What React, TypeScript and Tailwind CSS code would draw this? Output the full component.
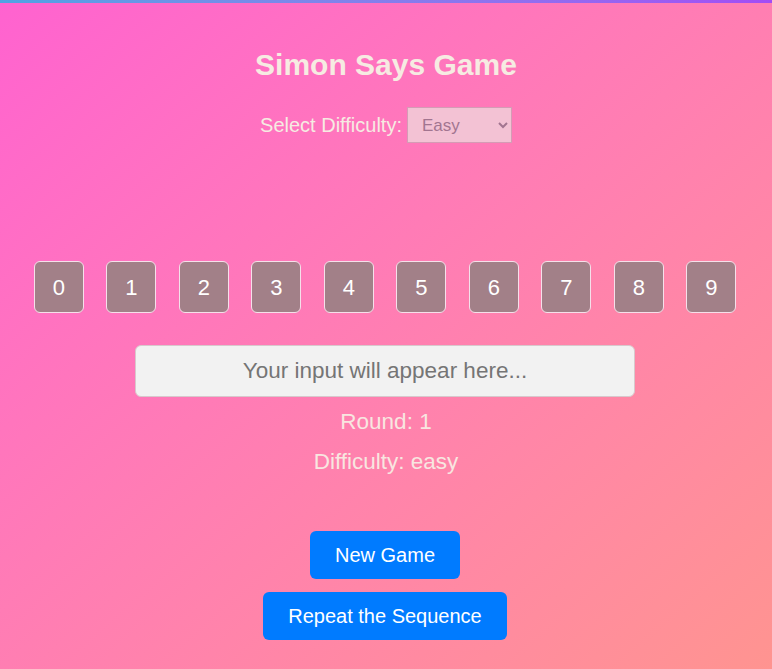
import { useState } from "react";

const digits = [0, 1, 2, 3, 4, 5, 6, 7, 8, 9];

export default function App() {
  const [difficulty, setDifficulty] = useState("easy");
  const [input, setInput] = useState("");

  return (
    <div className="min-h-[669px] w-full bg-gradient-to-br from-[#ff62d0] to-[#ff9490] font-['Liberation_Sans',Arial,sans-serif]">
      <div className="h-[3px] w-full bg-gradient-to-r from-[#4fa3e3] to-[#a24cf5]" />
      <div className="flex flex-col items-center">
        <h1 className="mt-[45px] text-[30px] font-bold leading-[34px] text-[#f6ebe2]">
          Simon Says Game
        </h1>
        <div className="mt-[25px] flex items-center gap-[5px]">
          <label className="text-[20px] leading-[22px] text-[#f6ebe2]">
            Select Difficulty:
          </label>
          <select
            value={difficulty}
            onChange={(e) => setDifficulty(e.target.value)}
            className="h-[36px] w-[105px] border border-[#d59bb5] bg-[#f3c2d4] px-[10px] text-[17px] text-[#a27590] outline-none"
          >
            <option value="easy">Easy</option>
            <option value="medium">Medium</option>
            <option value="hard">Hard</option>
          </select>
        </div>

        <div className="mt-[118px] -translate-x-px flex gap-[22.5px]">
          {digits.map((d) => (
            <button
              key={d}
              onClick={() => setInput(input + d)}
              className="flex h-[52px] w-[50px] items-center justify-center rounded-[6px] border border-[#f5e0ea] bg-[#a28088] text-[22px] text-white"
            >
              {d}
            </button>
          ))}
        </div>

        <input
          readOnly
          value={input}
          placeholder="Your input will appear here..."
          className="mt-[32px] h-[52px] w-[500px] -translate-x-px rounded-[6px] border border-[#d8c8cc] bg-[#f2f2f2] text-center text-[22.5px] text-[#555] outline-none placeholder:text-[#757575]"
        />

        <p className="mt-[13px] text-[22.5px] leading-[24px] text-[#f8e6e0]">
          Round: 1
        </p>
        <p className="mt-[16px] text-[22.5px] leading-[24px] text-[#f8e6e0]">
          Difficulty: {difficulty}
        </p>

        <button className="mt-[57px] h-[48px] w-[150px] -translate-x-px rounded-[6px] bg-[#007bff] text-[20px] text-white">
          New Game
        </button>
        <button className="mt-[13px] h-[48px] w-[244px] -translate-x-px rounded-[6px] bg-[#007bff] text-[20px] text-white">
          Repeat the Sequence
        </button>
      </div>
    </div>
  );
}
